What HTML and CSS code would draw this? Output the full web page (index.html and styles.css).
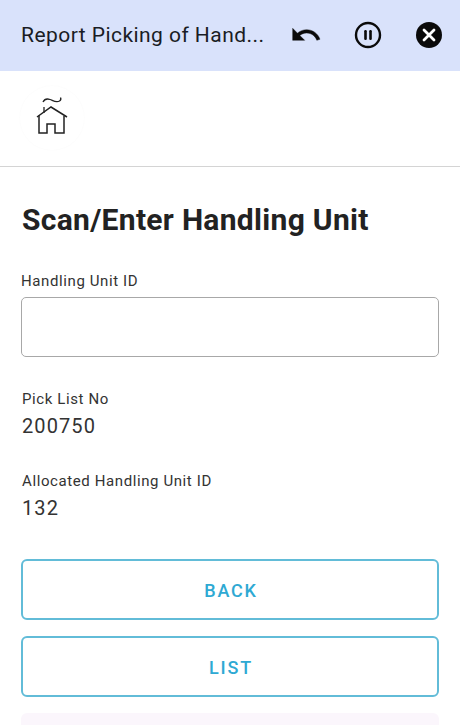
FILE: index.html
```html
<!DOCTYPE html>
<html lang="en">
<head>
  <meta charset="UTF-8" />
  <meta name="viewport" content="width=device-width, initial-scale=1.0" />
  <title>Report Picking of Handling Unit</title>
  <link rel="stylesheet" href="styles.css">
</head>
<body>
  <header class="topbar">
    <div class="topbar-title">Report Picking of Hand...</div>
    <div class="topbar-icons">
      <svg width="32" height="32" viewBox="0 0 24 24">
        <path d="M12.5 8c-2.65 0-5.05.99-6.9 2.6L2 7v9h9l-3.62-3.62c1.39-1.16 3.16-1.88 5.12-1.88 3.54 0 6.55 2.31 7.6 5.5l2.37-.78C21.08 11.03 17.15 8 12.5 8z" fill="#0a0a0a" stroke="#0a0a0a" stroke-width="0.3"/>
      </svg>
      <svg width="30" height="30" viewBox="0 0 30 30">
        <circle cx="15" cy="15" r="12" fill="none" stroke="#0a0a0a" stroke-width="2.4"/>
        <rect x="11.2" y="10" width="2.6" height="10" rx="1.2" fill="#0a0a0a"/>
        <rect x="16.2" y="10" width="2.6" height="10" rx="1.2" fill="#0a0a0a"/>
      </svg>
      <svg width="30" height="30" viewBox="0 0 30 30">
        <circle cx="15" cy="15" r="13" fill="#0a0a0a"/>
        <path d="M10 10l10 10M20 10L10 20" stroke="#fff" stroke-width="2.8" stroke-linecap="round"/>
      </svg>
    </div>
  </header>

  <div class="logo-row">
    <div class="logo">
      <svg width="64" height="64" viewBox="0 0 64 64">
        <path d="M23 16c1.5-3 4-3.5 7-2.5s6 3.5 9.5 1.5c1.5-1 1.5-2.5 1-3.5" fill="none" stroke="#222" stroke-width="1.3"/>
        <path d="M24 27v-6" fill="none" stroke="#222" stroke-width="1.3"/>
        <path d="M17 31L31 21l16 10" fill="none" stroke="#222" stroke-width="1.5"/>
        <path d="M19 29.5V47h8v-9h8v9h9V30" fill="none" stroke="#222" stroke-width="1.5"/>
      </svg>
    </div>
  </div>

  <main class="content">
    <h1 class="heading">Scan/Enter Handling Unit</h1>

    <label class="field-label" for="huId">Handling Unit ID</label>
    <input class="field-input" id="huId" type="text">

    <div class="info">
      <div class="info-label">Pick List No</div>
      <div class="info-value">200750</div>
    </div>
    <div class="info">
      <div class="info-label">Allocated Handling Unit ID</div>
      <div class="info-value">132</div>
    </div>

    <div class="actions">
      <button class="btn">BACK</button>
      <button class="btn">LIST</button>
      <div class="btn-disabled"></div>
    </div>
  </main>
</body>
</html>
```

FILE: styles.css
```css
html, body {
  height: 725px;
  overflow: hidden;
}
body {
  margin: 0;
  background-color: #fff;
  color: #1c1b1f;
  font-family: Roboto, sans-serif;
}
.topbar {
  height: 71px;
  box-sizing: border-box;
  display: flex;
  align-items: center;
  justify-content: space-between;
  padding: 0 16px 2px 21px;
  background-color: #d9e2fb;
}
.topbar-title {
  font-size: 21px;
  letter-spacing: 0.45px;
  color: #1a1c24;
}
.topbar-icons {
  display: flex;
  align-items: center;
  gap: 31px;
}
.logo-row {
  height: 96px;
  box-sizing: border-box;
  padding: 15px 0 0 20px;
  border-bottom: 1px solid #d4d4d4;
}
.logo {
  width: 64px;
  height: 64px;
  border-radius: 50%;
  box-shadow: 0 0 2px rgba(0, 0, 0, 0.03);
}
.content {
  padding: 0 21px;
}
.heading {
  margin: 35px 0 0 1px;
  font-size: 30px;
  line-height: 36px;
  font-weight: 700;
  letter-spacing: 0.3px;
  color: #222;
}
.field-label {
  display: block;
  margin-top: 33px;
  font-size: 15px;
  line-height: 20px;
  letter-spacing: 0.6px;
  color: #333;
}
.field-input {
  display: block;
  width: 100%;
  height: 60px;
  margin-top: 6px;
  box-sizing: border-box;
  border: 1.5px solid #a8a8a8;
  border-radius: 5px;
  background: #fff;
}
.info {
  margin-left: 1px;
}
.field-input + .info {
  margin-top: 32px;
}
.info + .info {
  margin-top: 32px;
}
.info-label {
  font-size: 15px;
  line-height: 20px;
  letter-spacing: 0.6px;
  color: #333;
}
.info-value {
  margin-top: 4px;
  font-size: 20px;
  line-height: 26px;
  letter-spacing: 1.1px;
  color: #333;
}
.actions {
  margin-top: 38px;
  display: flex;
  flex-direction: column;
  gap: 16px;
}
.btn {
  height: 61px;
  padding: 1px 0 0 2px;
  border: 2px solid #62bcd8;
  border-radius: 6px;
  background: #fff;
  color: #2ea9d3;
  font-family: Roboto, sans-serif;
  font-size: 18px;
  font-weight: 500;
  letter-spacing: 1.8px;
}
.btn-disabled {
  height: 12px;
  border-radius: 6px 6px 0 0;
  background-color: #fbf6fc;
}
```
